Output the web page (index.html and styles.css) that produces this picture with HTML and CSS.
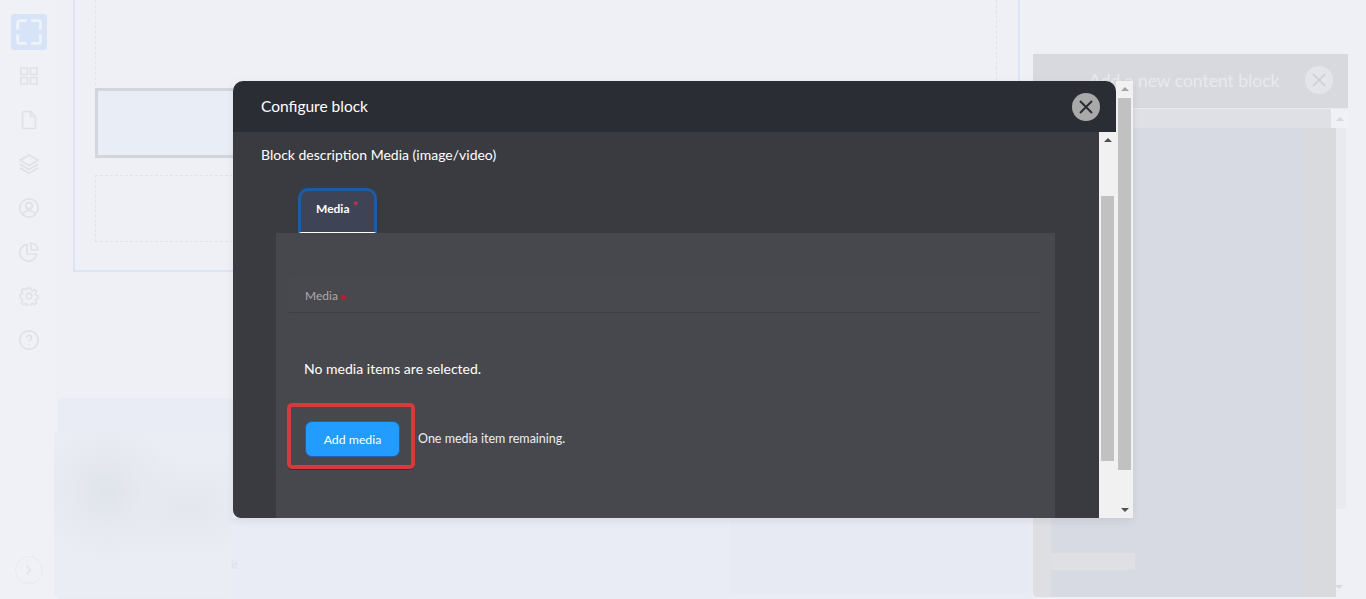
FILE: index.html
```html
<!DOCTYPE html>
<html lang="en">
<head>
    <meta charset="UTF-8">
    <meta name="viewport" content="width=device-width, initial-scale=1.0">
    <title>Configure block</title>
    <link rel="stylesheet" href="styles.css">
</head>
<body>
    <div class="page">
        <!-- Sidebar -->
        <nav class="sidebar">
            <div class="side-active">
                <svg viewBox="0 0 24 24" width="26" height="26" fill="none" stroke="#eef2fa" stroke-width="2.6"><path d="M10 1.500H3.500a2 2 0 0 0-2 2V10M14 1.500h6.500a2 2 0 0 1 2 2V10M10 22.500H3.500a2 2 0 0 1-2-2V14M14 22.500h6.500a2 2 0 0 0 2-2V14"/></svg>
            </div>
            <div class="side-item"><svg viewBox="0 0 20 20" width="20" height="20"><path d="M2 2h6.500v6.500H2zM11.500 2H18v6.500h-6.500zM2 11.500h6.500V18H2zM11.500 11.500H18V18h-6.500z"/></svg></div>
            <div class="side-item"><svg viewBox="0 0 20 20" width="20" height="20"><path d="M3.500 2.500a1 1 0 0 1 1-1h7l5 5v11a1 1 0 0 1-1 1h-11a1 1 0 0 1-1-1zM11.500 1.500v5h5"/></svg></div>
            <div class="side-item"><svg viewBox="0 0 20 20" width="20" height="20"><path d="M10 1l9 5.200-9 5.200-9-5.200zM1 10.200l9 5.200 9-5.200M1 14l9 5.200 9-5.200"/></svg></div>
            <div class="side-item"><svg viewBox="0 0 20 20" width="20" height="20"><circle cx="10" cy="10" r="9.200"/><circle cx="10" cy="7.800" r="3.200"/><path d="M3.800 16.500c1-3 3.500-4 6.200-4s5.200 1 6.200 4"/></svg></div>
            <div class="side-item"><svg viewBox="0 0 20 20" width="20" height="20"><path d="M8 2.300a8.500 8.500 0 1 0 9.700 9.700H8zM12 1v7h7a7.500 7.500 0 0 0-7-7z"/></svg></div>
            <div class="side-item"><svg viewBox="0 0 20 20" width="20" height="20"><circle cx="10" cy="10" r="2.800"/><path d="M8.300 1h3.400l.5 2.600 1.700.7 2.200-1.500 2.400 2.400-1.500 2.200.7 1.700 2.300.5v3.400l-2.300.5-.7 1.700 1.500 2.200-2.400 2.400-2.200-1.500-1.700.7-.5 2.300H8.300l-.5-2.300-1.700-.7-2.200 1.500-2.400-2.400 1.500-2.200-.7-1.700L0 11.700V8.300l2.300-.5.700-1.700-1.500-2.200 2.400-2.400 2.200 1.500 1.700-.7z" transform="translate(1 1) scale(.9)"/></svg></div>
            <div class="side-item"><svg viewBox="0 0 20 20" width="20" height="20"><circle cx="10" cy="10" r="9.200"/><path d="M7.500 7.500a2.500 2.500 0 1 1 3.800 2.200c-.9.500-1.300 1-1.300 2M10 14v1"/></svg></div>
            <div class="side-toggle"><svg viewBox="0 0 10 14" width="7" height="10"><path d="M2 1l6 6-6 6"/></svg></div>
        </nav>

        <!-- Canvas behind the dialog -->
        <main class="canvas">
            <div class="frame">
                <div class="slot-top"></div>
                <div class="slot-selected"></div>
                <div class="slot-bottom"></div>
            </div>
            <div class="lower">
                <div class="blur-card"></div>
                <span class="blur-frag">it</span>
                <div class="blur-wide"></div>
            </div>
        </main>

        <!-- Right panel behind the dialog -->
        <aside class="panel">
            <div class="panel-head">
                <span class="panel-title">Add a new content block</span>
                <span class="panel-close"><svg viewBox="0 0 14 14" width="14" height="14"><path d="M1 1l12 12M13 1L1 13"/></svg></span>
            </div>
            <div class="panel-strip">
                <div class="strip-main"></div>
                <div class="strip-end"><span class="arrow-up"></span></div>
            </div>
            <div class="panel-body">
                <div class="panel-side"></div>
                <div class="panel-list">
                    <div class="panel-gap"></div>
                </div>
                <div class="panel-scroll">
                    <div class="panel-track"></div>
                    <span class="arrow-down"></span>
                </div>
            </div>
        </aside>
    </div>

    <!-- Dialog -->
    <div class="dialog">
        <div class="dialog-main">
            <header class="dialog-head">
                <h1 class="dialog-title">Configure block</h1>
                <button class="dialog-close"><svg viewBox="0 0 14 14" width="14" height="14"><path d="M1 1l12 12M13 1L1 13"/></svg></button>
            </header>
            <div class="dialog-body">
                <div class="dialog-content">
                    <p class="block-desc">Block description Media (image/video)</p>
                    <div class="tabs">
                        <div class="tab">Media<sup class="req-tab">*</sup></div>
                    </div>
                    <section class="tab-panel">
                        <div class="field-label">Media<span class="req-dot"></span></div>
                        <p class="no-items">No media items are selected.</p>
                        <div class="add-row">
                            <div class="highlight"><button class="add-btn">Add media</button></div>
                            <span class="remaining">One media item remaining.</span>
                        </div>
                    </section>
                </div>
                <div class="scrollbar scrollbar-inner">
                    <span class="arrow-up"></span>
                    <span class="thumb"></span>
                </div>
            </div>
        </div>
        <div class="scrollbar scrollbar-outer">
            <span class="arrow-up"></span>
            <span class="thumb"></span>
            <span class="arrow-down"></span>
        </div>
    </div>
</body>
</html>
```

FILE: styles.css
```css
* {
    box-sizing: border-box;
}

html,
body {
    height: 100%;
}

body {
    margin: 0;
    overflow: hidden;
    background: #eef0f5;
    font-family: Lato, "Open Sans", sans-serif;
}

.page {
    display: flex;
    height: 599px;
}

/* Sidebar */
.sidebar {
    width: 58px;
    flex: none;
    display: flex;
    flex-direction: column;
    align-items: center;
    padding-top: 14px;
    background: #eff1f6;
    border-right: 1px solid #eceef3;
}

.side-active {
    width: 36px;
    height: 36px;
    display: flex;
    align-items: center;
    justify-content: center;
    background: #d7e4f7;
    border-radius: 3px;
}

.side-item {
    height: 44px;
    width: 100%;
    display: flex;
    align-items: center;
    justify-content: center;
}

.side-active + .side-item {
    margin-top: 4px;
}

.side-item svg {
    fill: none;
    stroke: #dfe1e5;
    stroke-width: 1.7;
}

.side-toggle {
    width: 28px;
    height: 28px;
    margin-top: auto;
    margin-bottom: 15px;
    display: flex;
    align-items: center;
    justify-content: center;
    border: 1px solid #e8eaef;
    border-radius: 50%;
}

.side-toggle svg {
    fill: none;
    stroke: #dfe1e6;
    stroke-width: 1.6;
}

/* Canvas */
.canvas {
    width: 975px;
    flex: none;
}

.frame {
    width: 947px;
    height: 272px;
    margin-left: 15px;
    padding: 0 21px 0 20px;
    border: 2px solid #dbe5f3;
    border-top: 0;
}

.slot-top {
    height: 85px;
    border-left: 1px dashed #dfe5ef;
    border-right: 1px dashed #e1e3e9;
}

.slot-selected {
    height: 70px;
    margin-top: 3px;
    background: #e9edf6;
    border: 3px solid #d3d5da;
}

.slot-bottom {
    height: 67px;
    margin-top: 17px;
    border: 1px dashed #e1e3e9;
}

.lower {
    height: 201px;
    margin-top: 126px;
    padding-top: 34px;
    background: #e9ecf5;
    display: flex;
    align-items: flex-start;
}

.blur-card {
    width: 177px;
    height: 165px;
    flex: none;
    margin-left: -4px;
    background:
        radial-gradient(circle at 30% 36%, #dfe4ea 0, #e6e9f0 22%, transparent 46%),
        radial-gradient(ellipse at 75% 46%, #e4e7ee 0, transparent 45%),
        #eaedf4;
}

.blur-frag {
    width: 6px;
    margin-top: 126px;
    font-size: 11px;
    line-height: 14px;
    font-weight: 700;
    color: #dfe1e8;
}

.blur-wide {
    width: 297px;
    height: 74px;
    flex: none;
    margin-left: 494px;
    margin-top: 88px;
    background: #e7eaf2;
}

/* Right panel */
.panel {
    width: 315px;
    flex: none;
    margin-top: 54px;
}

.panel-head {
    height: 54px;
    display: flex;
    align-items: center;
    justify-content: space-between;
    padding: 0 15px 2px 56px;
    background: #d8d9de;
}

.panel-title {
    font-size: 17.5px;
    color: #e8e9ed;
}

.panel-close {
    width: 28px;
    height: 28px;
    display: flex;
    align-items: center;
    justify-content: center;
    background: #e4e5ea;
    border-radius: 50%;
}

.panel-close svg {
    stroke: #d2d3d9;
    stroke-width: 2;
}

.panel-strip {
    height: 20px;
    display: flex;
    border-top: 1px solid #e9eaef;
}

.strip-main {
    flex: 1;
    background: #dfe0e5;
}

.strip-end {
    width: 17px;
    display: flex;
    justify-content: center;
    align-items: center;
    background: #eff1f6;
}

.strip-end .arrow-up {
    opacity: .15;
}

.panel-body {
    display: flex;
    height: 469px;
}

.panel-side {
    width: 18px;
    background: #dedfe3;
    border-radius: 0 0 0 4px;
}

.panel-list {
    width: 285px;
    padding-top: 425px;
    background: linear-gradient(90deg, #d7dae3 88%, #d9dade 89%);
}

.panel-gap {
    width: 84px;
    height: 17px;
    background: #dfe0e4;
}

.panel-scroll {
    width: 10px;
    position: relative;
}

.panel-track {
    height: 381px;
    background: #e9eaf0;
}

.panel-scroll .arrow-down {
    position: absolute;
    left: -1px;
    bottom: 8px;
    opacity: .15;
}

/* Dialog */
.dialog {
    position: absolute;
    left: 233px;
    top: 81px;
    width: 900px;
    height: 437px;
    display: flex;
    box-shadow: 0 3px 8px rgba(40, 42, 50, .08);
}

.dialog-main {
    width: 883px;
    display: flex;
    flex-direction: column;
    border-radius: 10px 10px 0 8px;
    overflow: hidden;
}

.dialog-head {
    height: 51px;
    flex: none;
    display: flex;
    align-items: center;
    justify-content: space-between;
    padding: 0 16px 0 28px;
    background: #2b2d35;
}

.dialog-title {
    margin: 0 0 2px;
    font-size: 15.5px;
    font-weight: 400;
    color: #fff;
}

.dialog-close {
    width: 28px;
    height: 28px;
    padding: 0;
    display: flex;
    align-items: center;
    justify-content: center;
    background: #a9a9a9;
    border: 0;
    border-radius: 50%;
}

.dialog-close svg {
    stroke: #2b2d35;
    stroke-width: 2;
}

.dialog-body {
    flex: 1;
    display: flex;
    min-height: 0;
}

.dialog-content {
    flex: 1;
    background: #3a3b40;
    padding: 14px 0 0 28px;
    color: #fff;
}

.block-desc {
    margin: 0;
    font-size: 14px;
    line-height: 18px;
}

.tabs {
    display: flex;
    margin-top: 24px;
    padding-left: 37px;
}

.tab {
    width: 79px;
    height: 45px;
    padding: 10px 0 0 15px;
    background: #3e4456;
    border: 3px solid #1a5ca6;
    border-bottom: 1px solid #fff;
    border-radius: 10px 10px 0 0;
    font-size: 12px;
    font-weight: 700;
    line-height: 16px;
}

.req-tab {
    margin-left: 3px;
    font-size: 13px;
    line-height: 0;
    vertical-align: 2px;
    color: #d03048;
}

.tab-panel {
    width: 779px;
    height: 285px;
    margin-left: 15px;
    padding: 43px 15px 0 13px;
    background: #47484d;
}

.field-label {
    height: 37px;
    padding: 12px 0 0 16px;
    background: #48494e;
    border-bottom: 1px solid #3f4045;
    font-size: 12px;
    line-height: 16px;
    color: #aaacaf;
}

.req-dot {
    display: inline-block;
    width: 5px;
    height: 5px;
    margin-left: 3px;
    background: #b5202c;
    border-radius: 50%;
}

.no-items {
    margin: 47px 0 0 15px;
    font-size: 14px;
    line-height: 18px;
    letter-spacing: .02px;
}

.add-row {
    display: flex;
    align-items: center;
    margin: 25px 0 0 -2px;
}

.highlight {
    width: 128px;
    height: 66px;
    padding: 14px 0 0 14px;
    border: 4px solid #d9393b;
    border-radius: 5px;
    box-shadow: 0 1px 0 rgba(0, 0, 0, .3);
}

.add-btn {
    display: block;
    width: 95px;
    height: 36px;
    padding: 0;
    background: #229cff;
    border: 1px solid #1a63b4;
    border-radius: 7px;
    font-family: inherit;
    font-size: 12.3px;
    color: #fff;
}

.remaining {
    margin: 5px 0 0 3px;
    font-size: 12.5px;
    color: #eee;
}

/* Scrollbars */
.scrollbar {
    width: 17px;
    flex: none;
    position: relative;
    background: #f1f1f1;
}

.thumb {
    position: absolute;
    left: 2px;
    width: 13px;
    background: #c1c1c1;
}

.scrollbar-inner .thumb {
    top: 64px;
    height: 265px;
}

.scrollbar-outer .thumb {
    top: 17px;
    height: 372px;
}

.scrollbar .arrow-up,
.scrollbar .arrow-down {
    position: absolute;
    left: 5px;
}

.scrollbar .arrow-up {
    top: 6px;
}

.scrollbar .arrow-down {
    bottom: 6px;
}

.arrow-up,
.arrow-down {
    width: 0;
    height: 0;
    border-left: 4px solid transparent;
    border-right: 4px solid transparent;
}

.arrow-up {
    border-bottom: 4px solid #505050;
}

.arrow-down {
    border-top: 4px solid #505050;
}

.scrollbar-outer .arrow-up {
    border-bottom-color: #a3a3a3;
}
```
